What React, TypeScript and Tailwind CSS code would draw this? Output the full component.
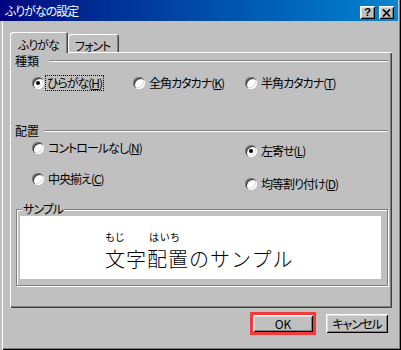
import React from "react";

function Radio({ checked }: { checked?: boolean }) {
  return (
    <span className="w-[12px] h-[12px] rounded-full bg-white shrink-0 flex items-center justify-center shadow-[inset_1px_1px_0_#808080,inset_2px_2px_0_#404040,inset_-1px_-1px_0_#ffffff,inset_-2px_-2px_0_#dfdfdf]">
      {checked && <span className="w-[4px] h-[4px] rounded-full bg-black" />}
    </span>
  );
}

function Key({ k }: { k: string }) {
  return (
    <span>
      (<span className="underline underline-offset-[1px]">{k}</span>)
    </span>
  );
}

function Opt({
  label,
  k,
  checked,
  focus,
}: {
  label: string;
  k: string;
  checked?: boolean;
  focus?: boolean;
}) {
  return (
    <div className="flex items-center h-[14px]">
      <Radio checked={checked} />
      {focus ? (
        <span className="ml-[1px] px-[1px] border border-dotted border-black text-[12px] leading-[14px] whitespace-nowrap">
          {label}
          <Key k={k} />
        </span>
      ) : (
        <span className="ml-[4px] text-[12px] leading-[14px] whitespace-nowrap">
          {label}
          <Key k={k} />
        </span>
      )}
    </div>
  );
}

function Btn({ children, className }: { children: React.ReactNode; className?: string }) {
  return (
    <div
      className={
        "bg-[#c0c0c0] flex items-center justify-center text-[12px] leading-[14px] shadow-[inset_1px_1px_0_#ffffff,inset_-1px_-1px_0_#000000,inset_2px_2px_0_#dfdfdf,inset_-2px_-2px_0_#808080] " +
        (className ?? "")
      }
    >
      {children}
    </div>
  );
}

export default function App() {
  return (
    <div className="w-[401px] h-[350px] bg-[#c0c0c0] flex flex-col overflow-hidden font-['Noto_Sans_CJK_JP','Noto_Sans',sans-serif] [font-feature-settings:'palt'] tracking-[-1px] text-black shadow-[inset_-1px_-1px_0_#000000,inset_-2px_-2px_0_#808080]">
      {/* Title bar */}
      <div className="h-[21px] mr-[3px] shrink-0 flex items-center justify-between bg-linear-to-r from-[#000080] to-[#1084d0] pl-[5px] pr-[4px]">
        <span className="text-white text-[12px] leading-[14px] mt-[1px]">ふりがなの設定</span>
        <div className="flex gap-[4px] self-end mb-[2px]">
          <Btn className="w-[15px] h-[13px]">
            <span className="font-['Liberation_Sans',sans-serif] font-bold text-[11px] leading-[11px] tracking-normal">?</span>
          </Btn>
          <Btn className="w-[15px] h-[13px]">
            <svg width="9" height="8" viewBox="0 0 9 8">
              <path d="M1 0.5 L8 7.5 M8 0.5 L1 7.5" stroke="#000" strokeWidth="1.6" />
            </svg>
          </Btn>
        </div>
      </div>

      {/* Body */}
      <div className="flex-1 flex flex-col pl-[10px] pr-[9px] shadow-[inset_2px_0_0_#c0c0c0,inset_3px_0_0_#ffffff]">
        {/* Tabs */}
        <div className="mt-[11px] h-[20px] flex items-end shrink-0">
          <div className="relative z-10 w-[58px] h-[21px] -mb-[1px] bg-[#c0c0c0] rounded-t-[3px] pl-[8px] pt-[6px] text-[12px] leading-[14px] shadow-[inset_1px_1px_0_#ffffff,inset_-1px_0_0_#404040,inset_-2px_0_0_#808080]">
            ふりがな
          </div>
          <div className="w-[51px] h-[18px] rounded-t-[3px] pl-[7px] pt-[5px] text-[12px] leading-[14px] shadow-[inset_1px_1px_0_#ffffff,inset_-1px_0_0_#404040,inset_-2px_0_0_#808080]">
            フォント
          </div>
        </div>

        {/* Panel */}
        <div className="h-[256px] shrink-0 flex flex-col shadow-[inset_1px_1px_0_#ffffff,inset_-1px_-1px_0_#404040,inset_-2px_-2px_0_#808080]">
          <div className="mt-[2px] h-[14px] flex items-center pl-[5px] pr-[4px]">
            <span className="text-[12px] leading-[14px] tracking-normal">種類</span>
            <div className="flex-1 ml-[10px] h-[2px] border-t border-t-[#808080] border-b border-b-white" />
          </div>

          <div className="mt-[7px] h-[16px] flex items-center pl-[22px]">
            <div className="w-[101px]">
              <Opt label="ひらがな" k="H" checked focus />
            </div>
            <div className="w-[112px]">
              <Opt label="全角カタカナ" k="K" />
            </div>
            <div>
              <Opt label="半角カタカナ" k="T" />
            </div>
          </div>

          <div className="mt-[33px] h-[14px] flex items-center pl-[5px] pr-[4px]">
            <span className="text-[12px] leading-[14px] tracking-normal">配置</span>
            <div className="flex-1 ml-[5px] h-[2px] border-t border-t-[#808080] border-b border-b-white" />
          </div>

          <div className="flex pl-[22px]">
            <div className="w-[213px] flex flex-col">
              <div className="mt-[3px]">
                <Opt label="コントロールなし" k="N" />
              </div>
              <div className="mt-[17px]">
                <Opt label="中央揃え" k="C" />
              </div>
            </div>
            <div className="flex flex-col">
              <div className="mt-[6px]">
                <Opt label="左寄せ" k="L" checked />
              </div>
              <div className="mt-[19px]">
                <Opt label="均等割り付け" k="D" />
              </div>
            </div>
          </div>

          {/* Sample group */}
          <div className="relative mt-[18px] ml-[6px] w-[372px] h-[77px] border border-[#808080] shadow-[1px_1px_0_#ffffff,inset_1px_1px_0_#ffffff] flex flex-col">
            <span className="absolute left-[5px] -top-[7px] bg-[#c0c0c0] px-[1px] text-[12px] leading-[12px]">
              サンプル
            </span>
            <div className="mt-[6px] ml-[3px] mr-[6px] h-[63px] bg-white pt-[16px] pl-[85px] flex flex-col tracking-normal">
              <div className="flex h-[10px] text-[10px] leading-[10px] tracking-[1px]">
                <span className="w-[44px]">もじ</span>
                <span>はいち</span>
              </div>
              <div className="mt-[7px] text-[20px] leading-[20px] tracking-[1px] font-light [font-feature-settings:normal] whitespace-nowrap">
                文字配置のサンプル
              </div>
            </div>
          </div>
        </div>

        {/* Buttons */}
        <div className="mt-[4px] flex justify-end items-center pr-[4px] gap-[10px]">
          <div className="w-[66px] h-[23px] border-[3px] border-[#f23a3a] flex">
            <Btn className="flex-1 tracking-normal">OK</Btn>
          </div>
          <Btn className="w-[62px] h-[19px]">キャンセル</Btn>
        </div>
      </div>
    </div>
  );
}
